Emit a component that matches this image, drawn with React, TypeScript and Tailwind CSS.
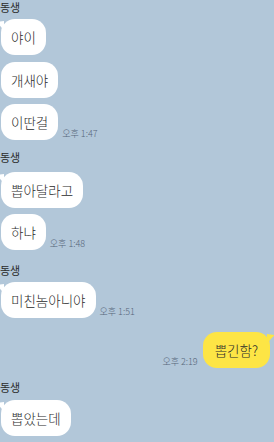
const font = { fontFamily: '"Noto Sans CJK KR", "Noto Sans", sans-serif' };

function Tail({ side, color }: { side: 'left' | 'right'; color: string }) {
  return (
    <svg
      width="8"
      height="10"
      viewBox="0 0 8 10"
      className={side === 'left' ? 'absolute -left-[5px] top-[2px]' : 'absolute -right-[5px] top-[2px]'}
    >
      {side === 'left' ? (
        <path d="M8 0 L0 1 Q4 4 8 10 Z" fill={color} />
      ) : (
        <path d="M0 0 L8 1 Q4 4 0 10 Z" fill={color} />
      )}
    </svg>
  );
}

function Bubble({ text, tail, time, className }: { text: string; tail?: boolean; time?: string; className?: string }) {
  return (
    <div className={`flex items-end ${className ?? ''}`}>
      <div className="relative h-9 rounded-[14px] bg-white px-[10px] flex items-center text-[13.5px] font-light text-[#2b2b2b]">
        {tail && <Tail side="left" color="#ffffff" />}
        {text}
      </div>
      {time && <span className="ml-[4px] mb-[2px] text-[9px] leading-none font-light text-[#56667a]">{time}</span>}
    </div>
  );
}

function Name({ className }: { className?: string }) {
  return <div className={`h-[14px] text-[11px] leading-[14px] text-[#2a2a2a] ${className ?? ''}`}>동생</div>;
}

export default function App() {
  return (
    <div className="w-[274px] h-[442px] overflow-hidden bg-[#b2c7d9] pl-[1px]" style={font}>
      <div className="flex flex-col">
        <Name className="-ml-[1px]" />
        <Bubble text="야이" tail className="mt-[5px]" />
        <Bubble text="개새야" className="mt-[7px]" />
        <Bubble text="이딴걸" time="오후 1:47" className="mt-[6px]" />
        <Name className="mt-[10px] -ml-[1px]" />
        <Bubble text="뽑아달라고" tail className="mt-[8px]" />
        <Bubble text="하냐" time="오후 1:48" className="mt-[6px]" />
        <Name className="mt-[13px] -ml-[1px]" />
        <Bubble text="미친놈아니야" tail time="오후 1:51" className="mt-[5px]" />
        <div className="mt-[14px] flex items-end justify-end pr-[4px]">
          <span className="mr-[5px] mb-[2px] text-[9px] leading-none font-light text-[#56667a]">오후 2:19</span>
          <div className="relative h-9 rounded-[14px] bg-[#fde545] px-[12px] flex items-center text-[13.5px] font-light text-[#2b2b2b]">
            <Tail side="right" color="#fde545" />
            뽑긴함?
          </div>
        </div>
        <Name className="mt-[12px] -ml-[1px]" />
        <Bubble text="뽑았는데" tail className="mt-[6px]" />
      </div>
    </div>
  );
}
